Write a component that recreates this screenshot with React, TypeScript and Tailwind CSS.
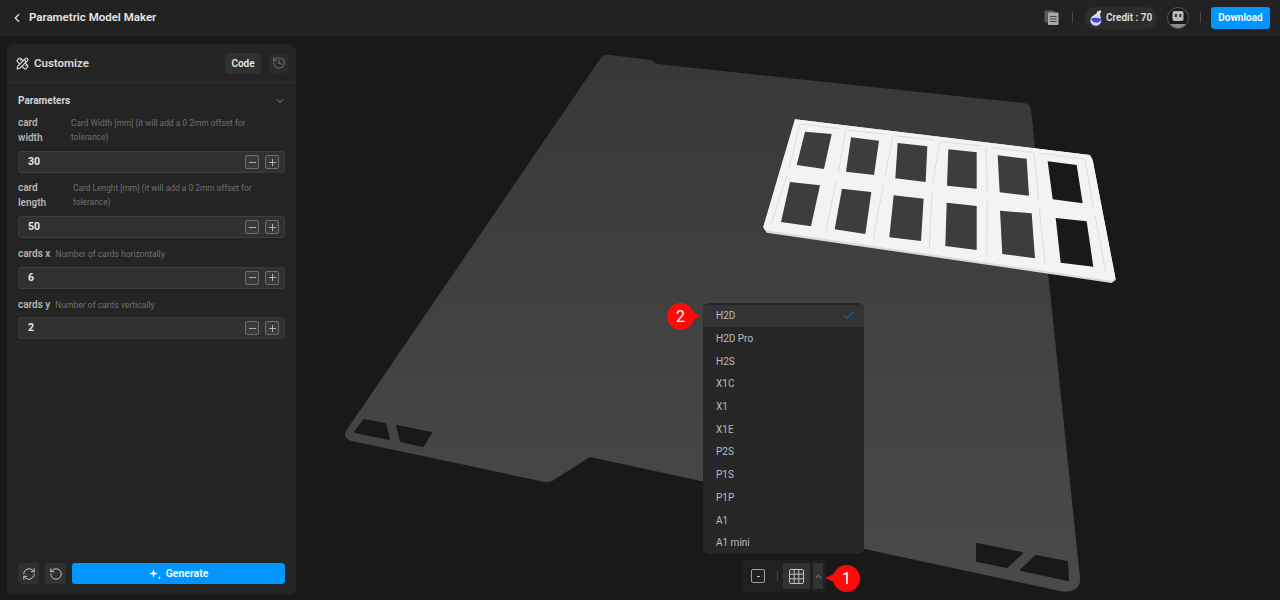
import { ChevronLeft, ChevronDown, ChevronUp, Minus, Plus, History, RefreshCw, RotateCcw, PencilRuler, Check } from "lucide-react";

const font = { fontFamily: 'Roboto, "Noto Sans", sans-serif' };

const holes: [string, boolean][] = [
  ["165,65 245,72 222,177 140,165", false],
  ["303,82 387,92 372,195 288,185", false],
  ["443,99 532,109 527,216 436,205", false],
  ["595,118 680,127 680,236 591,227", false],
  ["743,136 830,146 837,257 749,247", false],
  ["893,154 980,165 998,280 908,268", true],
  ["120,216 210,226 183,349 93,336", false],
  ["276,236 364,246 346,372 254,358", false],
  ["431,256 521,266 513,393 418,382", false],
  ["590,278 680,288 680,420 586,408", false],
  ["750,302 845,310 855,445 757,432", false],
  ["917,324 1010,334 1030,470 932,458", true],
];

const grooves = [
  "150,42 118,172",
  "112,195 64,340",
  "288,58 265,190",
  "258,215 228,362",
  "430,75 405,200",
  "400,225 370,385",
  "570,92 548,220",
  "546,245 538,412",
  "708,112 712,250",
  "712,275 710,435",
  "852,130 866,270",
  "868,295 885,462",
  "1005,150 1030,295",
  "1035,315 1068,490",
  "150,42 270,56",
  "290,60 410,73",
  "432,77 552,90",
  "575,95 695,108",
  "722,113 850,127",
  "875,130 1005,147",
];

function Scene() {
  return (
    <svg className="absolute inset-0 w-full h-full" viewBox="0 0 1280 564" preserveAspectRatio="none" aria-hidden="true">
      <defs>
        <linearGradient id="plate" x1="0" y1="0" x2="0" y2="1">
          <stop offset="0" stopColor="#383838" />
          <stop offset="1" stopColor="#4a4a4a" />
        </linearGradient>
      </defs>
      <g transform="translate(0 -36)">
        <path
          d="M600 59 Q604 54 610 55 L651 60 L657 64 L975 98 L1024 103 Q1030 104 1031 110 L1080 578 Q1081 588 1071 591 Q1066 592 1060 591 L860 548 L760 527 L715 484 L590 457 L552 481 Q547 483 540 481 L352 441 Q342 438 346 431 Z"
          fill="url(#plate)"
        />
        <g fill="#191919" stroke="#191919" strokeWidth="2" strokeLinejoin="round">
          <polygon points="364,420 385,424 389,439 355,432" />
          <polygon points="397,426 431,433 423,446 401,441" />
          <polygon points="977,544 1022,553 1007,567 977,561" />
          <polygon points="1036,556 1067,562 1068,580 1021,570" />
        </g>
        <g transform="translate(750 110) scale(0.33333)">
          <polygon points="135,28 1020,135 1028,150 1097,510 1085,519 50,368 40,352" fill="#dcd9dd" />
          <polygon points="135,28 1020,135 1028,150 1097,507 1085,512 45,361 40,350" fill="#f5f2f5" />
          {grooves.map((p) => (
            <polyline key={p} points={p} fill="none" stroke="#dad7db" strokeWidth="2.5" />
          ))}
          {holes.map(([p, dark]) => (
            <polygon key={p} points={p} fill={dark ? "#191919" : "#3d3d3d"} />
          ))}
        </g>
      </g>
    </svg>
  );
}

function Stepper({ value, tight }: { value: string; tight: boolean }) {
  return (
    <div className={tight ? "mt-[5px] h-[22px] flex items-center bg-[#303030] border border-[#3c3c3c] rounded-[3px] pl-[9px] pr-[5px]" : "mt-[6px] h-[22px] flex items-center bg-[#303030] border border-[#3c3c3c] rounded-[3px] pl-[9px] pr-[5px]"}>
      <span className="flex-1 text-[10.5px] font-bold text-[#e8e8e8]">{value}</span>
      <span className="w-[14px] h-[14px] flex items-center justify-center border border-[#6e6e6e] rounded-[2px] bg-[#3a3a3a] text-[#c8c8c8] mr-[6px]">
        <Minus size={11} strokeWidth={1.8} />
      </span>
      <span className="w-[14px] h-[14px] flex items-center justify-center border border-[#6e6e6e] rounded-[2px] bg-[#3a3a3a] text-[#c8c8c8]">
        <Plus size={11} strokeWidth={1.8} />
      </span>
    </div>
  );
}

function Param({ label, desc, value, wide, gap }: { label: string; desc: string; value: string; wide?: number; gap: string }) {
  return (
    <div className={gap}>
      <div className="flex items-start">
        <div className="text-[10px] leading-[14.5px] font-semibold text-[#b4b4b4] shrink-0 whitespace-pre-line" style={wide ? { width: wide } : undefined}>
          {label}
        </div>
        <div className={wide ? "max-w-[185px] text-[8.4px] leading-[13.5px] text-[#6f6f6f] pt-[1px]" : "text-[8.5px] leading-[13.5px] text-[#6f6f6f] ml-[5px] pt-[1px]"}>
          {desc}
        </div>
      </div>
      <Stepper value={value} tight={!wide} />
    </div>
  );
}

function Sparkle() {
  return (
    <svg width="12" height="12" viewBox="0 0 12 12" fill="#fff" aria-hidden="true">
      <path d="M4.5 1 L5.6 4.4 L9 5.5 L5.6 6.6 L4.5 10 L3.4 6.6 L0 5.5 L3.4 4.4 Z" />
      <circle cx="10.4" cy="9.8" r="1" />
    </svg>
  );
}

function Flask() {
  return (
    <svg width="13" height="16" viewBox="0 0 13 16" aria-hidden="true">
      <path d="M8 0.8 L11 2.8 L10 4 L11 9 A5.4 5.4 0 1 1 3.4 5.6 L6.4 3.4 L7.2 1.6 Z" fill="#d6daf2" />
      <path d="M1 8.6 Q5 6.8 11.4 9 A5.4 5.4 0 0 1 1 8.6 Z" fill="#4a3ee6" />
      <circle cx="10" cy="1.5" r="1.1" fill="#f5f5ff" />
    </svg>
  );
}

function Avatar() {
  return (
    <svg width="22" height="22" viewBox="0 0 22 22" aria-hidden="true">
      <circle cx="11" cy="11" r="10.5" fill="#191919" stroke="#555" />
      <path d="M3 17 H19 A10 10 0 0 1 3 17 Z" fill="#8c8c8c" />
      <rect x="5.5" y="4" width="11" height="10" rx="2" fill="#b9b9b9" />
      <rect x="8" y="7" width="1.8" height="3" fill="#222" />
      <rect x="12.5" y="7" width="1.8" height="3" fill="#222" />
    </svg>
  );
}

function CopyIcon() {
  return (
    <svg width="15" height="15" viewBox="0 0 15 15" aria-hidden="true">
      <rect x="0.5" y="0.5" width="10" height="12" rx="1" fill="#5a5a5a" />
      <rect x="4" y="2.5" width="10.5" height="12.5" rx="1" fill="#a9a9a9" />
      <rect x="6" y="6" width="6.5" height="1" fill="#444" />
      <rect x="6" y="8.5" width="6.5" height="1" fill="#444" />
      <rect x="6" y="11" width="6.5" height="1" fill="#444" />
    </svg>
  );
}

function GridIcon() {
  return (
    <svg width="15" height="15" viewBox="0 0 15 15" fill="none" stroke="#c4c4c4" strokeWidth="1" aria-hidden="true">
      <rect x="0.5" y="0.5" width="14" height="14" rx="1.5" />
      <path d="M5.2 0.5 V14.5 M9.8 0.5 V14.5 M0.5 5.2 H14.5 M0.5 9.8 H14.5" />
    </svg>
  );
}

function Marker({ n, className, side }: { n: string; className: string; side: "left" | "right" }) {
  return (
    <div className={className}>
      <div className="relative w-[27px] h-[27px] rounded-full bg-[#ff0a0a] flex items-center justify-center text-white text-[16px] leading-none">
        {n}
        {side === "left" ? (
          <span className="absolute left-[-8px] top-[8px] w-0 h-0 border-y-[5.5px] border-y-transparent border-r-[11px] border-r-[#ff0a0a]" />
        ) : (
          <span className="absolute right-[-7px] top-[8px] w-0 h-0 border-y-[5.5px] border-y-transparent border-l-[11px] border-l-[#ff0a0a]" />
        )}
      </div>
    </div>
  );
}

const models = ["H2D", "H2D Pro", "H2S", "X1C", "X1", "X1E", "P2S", "P1S", "P1P", "A1", "A1 mini"];

export default function App() {
  return (
    <div className="w-[1280px] h-[600px] overflow-hidden bg-[#191919] flex flex-col" style={font}>
      <header className="h-[36px] shrink-0 bg-[#222222] flex items-center pl-[10px] pr-[10px]">
        <ChevronLeft size={14} strokeWidth={2} className="text-[#e8e8e8] mb-[1px]" />
        <span className="ml-[5px] mb-[1px] text-[11.5px] font-semibold text-[#e6e6e6]">Parametric Model Maker</span>
        <div className="ml-auto flex items-center mb-[1px]">
          <CopyIcon />
          <span className="ml-[13px] w-px h-[11px] bg-[#4a4a4a]" />
          <div className="ml-[11px] w-[73px] h-[22px] rounded-full bg-[#2d2d2d] flex items-center pl-[6px] gap-[3px]">
            <Flask />
            <span className="text-[10px] font-semibold text-[#e2e2e2] whitespace-nowrap">Credit : 70</span>
          </div>
          <span className="ml-[10px]"><Avatar /></span>
          <span className="ml-[11px] w-px h-[11px] bg-[#4a4a4a]" />
          <button className="ml-[10px] w-[59px] h-[22px] rounded-[3px] bg-[#0095ff] text-white text-[10px] font-semibold">Download</button>
        </div>
      </header>

      <main className="relative flex-1 min-h-0">
        <Scene />

        <aside className="absolute left-[7px] top-[8px] w-[289px] h-[551px] rounded-[6px] bg-[#242424] flex flex-col">
          <div className="h-[39px] shrink-0 border-b border-[#2e2e2e] flex items-center pl-[9px] pr-[8px]">
            <PencilRuler size={13} strokeWidth={2} className="text-[#e0e0e0]" />
            <span className="ml-[5px] mt-[1px] text-[11.5px] font-semibold text-[#dcdcdc]">Customize</span>
            <span className="ml-auto w-[36px] h-[21px] rounded-[3px] bg-[#303030] flex items-center justify-center text-[10px] font-semibold text-[#e6e6e6]">Code</span>
            <span className="ml-[8px] w-[19px] h-[19px] rounded-[3px] bg-[#2b2b2b] flex items-center justify-center text-[#6f6f6f]">
              <History size={14} strokeWidth={1.8} />
            </span>
          </div>
          <div className="flex-1 px-[11px]">
            <div className="flex items-center justify-between mt-[10px] h-[15px]">
              <span className="text-[10px] font-bold text-[#d4d4d4]">Parameters</span>
              <ChevronDown size={12} strokeWidth={1.5} className="text-[#a8a8a8] mr-[-1px]" />
            </div>
            <Param gap="mt-[8px]" label={"card\nwidth"} wide={53} value="30" desc="Card Width [mm] (it will add a 0.2mm offset for tolerance)" />
            <Param gap="mt-[8px]" label={"card\nlength"} wide={55} value="50" desc="Card Lenght [mm] (it will add a 0.2mm offset for tolerance)" />
            <Param gap="mt-[9px]" label="cards x" value="6" desc="Number of cards horizontally" />
            <Param gap="mt-[9px]" label="cards y" value="2" desc="Number of cards vertically" />
          </div>
          <div className="flex items-center px-[11px] pb-[11px] gap-[6px]">
            <span className="w-[21px] h-[21px] rounded-[3px] bg-[#303030] flex items-center justify-center text-[#c4c4c4]"><RefreshCw size={14} strokeWidth={1.7} /></span>
            <span className="w-[21px] h-[21px] rounded-[3px] bg-[#303030] flex items-center justify-center text-[#c4c4c4]"><RotateCcw size={14} strokeWidth={1.7} /></span>
            <button className="flex-1 h-[21px] rounded-[3px] bg-[#0095ff] text-white text-[10.5px] font-semibold flex items-center justify-center gap-[5px]">
              <Sparkle />
              Generate
            </button>
          </div>
        </aside>

        <div className="absolute left-[703px] top-[267px] w-[161px] h-[251px] rounded-[6px] bg-[#262626] pt-[1.5px]">
          {models.map((m, i) => (
            <div key={m} className={i === 0 ? "h-[22.7px] flex items-center pl-[13px] pr-[9px] bg-[#333333] justify-between text-[10px] text-[#bdbdbd]" : "h-[22.7px] flex items-center pl-[13px] text-[10px] text-[#bdbdbd]"}>
              {m}
              {i === 0 && <Check size={13} strokeWidth={1.4} className="text-[#1a8fe0]" />}
            </div>
          ))}
        </div>
        <Marker n="2" side="right" className="absolute left-[667px] top-[267px]" />

        <div className="absolute left-[742px] top-[524px] w-[84px] h-[32px] rounded-[3px] bg-[#202020] flex items-center pl-[9px]">
          <span className="w-[14px] h-[14px] border border-[#a0a0a0] rounded-[2px] flex items-center justify-center">
            <span className="w-[3px] h-[1px] bg-[#c4c4c4]" />
          </span>
          <span className="ml-[12px] w-px h-[10px] bg-[#4a4a4a]" />
          <span className="ml-[5px] w-[27px] h-[26px] rounded-[2px] bg-[#333333] flex items-center justify-center"><GridIcon /></span>
          <span className="ml-[3px] w-[10px] h-[26px] rounded-[2px] bg-[#333333] flex items-center justify-center text-[#b0b0b0]"><ChevronUp size={9} strokeWidth={2} /></span>
        </div>
        <Marker n="1" side="left" className="absolute left-[833px] top-[529px]" />
      </main>
    </div>
  );
}
